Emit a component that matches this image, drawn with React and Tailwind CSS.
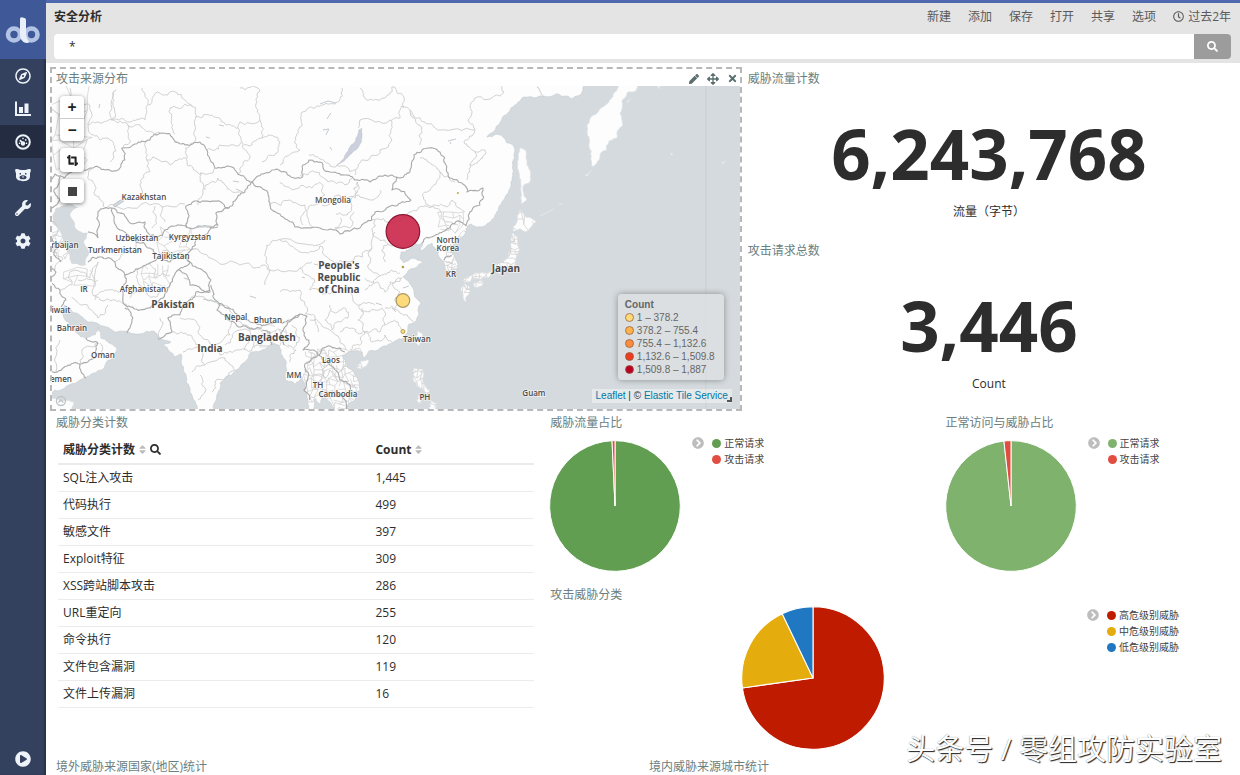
import React from "react";
import {
  FaArrowsAlt, FaChevronCircleRight, FaCog, FaCropAlt, FaPen, FaPlayCircle,
  FaRegClock, FaRegCompass, FaSearch, FaSort, FaTimes, FaWrench,
} from "react-icons/fa";

/* ---------- map geometry ---------- */

function makeRandom(seed) {
  let s = seed;
  return () => {
    s = (s * 16807) % 2147483647;
    return s / 2147483647 - 0.5;
  };
}

// Midpoint displacement turns a coarse outline into a natural-looking line.
function roughPath(text, seed, amount = 0.3, closed = false) {
  const random = makeRandom(seed * 7919 + 17);
  let pts = text.split(" ").map((p) => p.split(",").map(Number));
  if (closed) pts.push(pts[0]);
  for (let pass = 0; pass < 3; pass++) {
    const next = [pts[0]];
    for (let i = 1; i < pts.length; i++) {
      const [ax, ay] = pts[i - 1];
      const [bx, by] = pts[i];
      const d = Math.hypot(bx - ax, by - ay);
      if (d > 2.2 && d < 140) {
        const k = random() * amount * Math.min(d, 12);
        next.push([(ax + bx) / 2 - ((by - ay) / d) * k, (ay + by) / 2 + ((bx - ax) / d) * k]);
      }
      next.push(pts[i]);
    }
    pts = next;
  }
  return "M" + pts.map((p) => p[0].toFixed(1) + " " + p[1].toFixed(1)).join("L") + (closed ? "Z" : "");
}

// Jittered grid for areas that are split into many small provinces.
function meshPath(x, y, w, h, step, seed) {
  const random = makeRandom(seed * 7919 + 17);
  const cols = Math.round(w / step);
  const rows = Math.round(h / step);
  const pt = [];
  for (let r = 0; r <= rows; r++) {
    pt.push([]);
    for (let c = 0; c <= cols; c++) {
      pt[r].push((x + c * step + random() * step * 1.1).toFixed(1) + " " + (y + r * step + random() * step * 1.1).toFixed(1));
    }
  }
  let d = "";
  for (let r = 0; r <= rows; r++) {
    for (let c = 0; c <= cols; c++) {
      if (c < cols && random() > -0.25) d += `M${pt[r][c]}L${pt[r][c + 1]}`;
      if (r < rows && random() > -0.25) d += `M${pt[r][c]}L${pt[r + 1][c]}`;
    }
  }
  return d;
}

const MAINLAND =
  "45,80 583,80 583,88 580,95 571,99 566,96 558,94 548,97 543,96 539,88 537,87 543,96 532,97 522,98 515,105 510,111 500,123 487,137 497,134 504,138 507,143 513,145 515,150 513,165 511,182 505,198 496,214 485,226 476,227 471,224 466,229 462,238 454,244 450,249 454,255 458,264 457,273 451,277 446,276 445,267 443,261 440,258 438,250 432,243 427,246 421,251 423,243 416,244 408,250 401,252 400,258 404,263 412,258 423,262 417,267 408,271 403,277 409,282 414,290 417,299 421,303 418,310 419,315 415,322 409,324 408,332 402,339 392,343 380,348 369,351 364,358 362,352 352,351 343,355 347,366 356,376 360,390 354,401 345,409 338,411 330,402 322,397 320,404 314,399 313,411 308,411 306,393 302,376 295,384 286,381 287,370 283,357 276,344 270,345 262,350 250,353 245,362 232,375 220,383 217,395 214,411 198,411 190,392 184,372 181,354 175,357 163,345 171,342 160,338 152,331 130,333 115,332 103,326 88,322 76,313 65,305 60,310 68,322 77,333 86,338 95,335 98,327 101,338 108,342 117,348 113,357 105,366 95,373 80,380 65,388 45,393";

const ISLANDS = [
  "520,148 525,150 527,165 531,180 524,185 527,200 521,204 521,180 518,160",
  "520,210 526,217 536,222 530,228 524,232 519,229 513,231 517,222",
  "513,233 518,238 519,248 516,258 514,266 506,267 500,274 494,271 488,278 480,279 474,278 466,283 463,280 471,276 481,273 489,273 494,266 500,263 507,258 511,248 511,239",
  "464,284 469,286 470,292 466,302 463,298 461,290", "474,282 483,281 482,286 475,288",
  "619,80 618,88 611,99 600,109 590,119 587,132 589,146 592,167 600,158 602,152 607,150 609,141 617,138 618,130 623,125 620,113 622,101 628,92 636,91 643,80",
  "585,175 592,170 586,176", "418,331 422,333 419,346 415,342", "357,366 361,361 369,360 367,365 361,369 357,368",
  "414,368 423,369 423,382 430,391 427,394 417,387 413,379", "418,395 423,398 421,404 417,401", "431,400 437,403 436,410 429,408",
  "45,399 60,401 74,402 72,412 45,412", "627,102 631,99 628,103", "657,86 660,86 659,89", "671,153 673,155 671,155", "722,163 726,161 723,164",
];

const CASPIAN = "56,208 68,204 79,207 70,215 75,227 88,233 84,243 89,254 86,265 72,264 67,251 62,237 54,225 53,214";
const BAIKAL = "362,128 362,138 356,150 347,158 337,165 346,154 354,143 359,130";

const COUNTRY_BORDERS = [
  "50,182 55,174 64,178 72,172 84,170 92,168 105,170 120,168 125,160 122,148 135,144 150,140 160,133 170,134 175,142 185,145 200,142 207,150 215,168 228,166 240,175 252,182 258,176 272,170 290,176 303,176 303,165 309,160 320,162 330,172 345,175 355,180 370,182 385,175 400,178 410,172 414,155 428,148 440,152 446,165 450,178 462,183 467,192 483,188 480,205 470,212 466,226",
  "252,182 265,190 270,205 280,214 295,227 320,228 340,234 360,228 372,220 375,212 395,206 411,200 405,192 392,190 397,178",
  "252,182 245,192 238,196 229,208 216,213 218,225 208,233 196,238 191,250 186,256 190,262",
  "229,208 215,201 195,201 186,206 189,216 186,227 200,226 218,227",
  "98,238 98,212 112,208 124,214 130,223 145,222 149,234 157,238 165,230 175,226 187,227",
  "98,238 88,232", "112,208 120,230 135,240 150,248 160,256",
  "88,262 100,257 115,262 125,275 140,268 152,262 160,256 170,262 180,254 190,262",
  "125,275 123,290 125,305 135,309 150,308 163,298 170,285 178,270 190,262 205,272 211,280 210,292 200,288 190,285 187,275 178,270",
  "125,308 133,318 127,333", "210,290 196,292 190,300 180,315 168,318 172,332 158,339",
  "211,285 213,297 222,304 235,313 250,322 262,326 275,322 290,320 300,314",
  "220,303 217,310 230,321 245,326 262,328", "262,330 270,332 272,345", "300,314 288,322 281,335 284,345",
  "300,314 307,316 303,330 309,340 303,350 312,350 319,355 326,347 335,348 345,352",
  "318,355 305,364 309,375 304,390 310,400", "319,355 326,362 334,368 340,380 350,385 350,393 338,394 330,397",
  "50,236 57,245 54,252 61,262", "52,283 60,290 66,300 61,307", "50,262 56,272 50,280",
  "50,372 67,366 80,364 95,358 98,343 86,338", "80,364 86,378", "422,243 434,236 446,230 461,222 466,226", "444,260 452,256",
  "60,177 54,190 60,200 52,208", "338,394 345,400 347,409",
];

const REGION_BORDERS = [
  "70,88 76,102 90,106 88,124 97,122 112,120 113,104 116,90", "116,90 112,120 128,125 130,140 122,148",
  "88,124 95,136 108,138 115,146 110,162", "128,125 145,130 160,133", "112,120 130,122 145,120 148,105 142,88",
  "148,105 160,93 175,92 185,100 196,108 195,120 196,140", "175,134 172,120 170,108 185,104 192,106",
  "196,117 212,115 225,124 238,128 242,142 238,146 220,145 207,150", "238,128 240,122 260,120 262,138 252,145 244,145",
  "260,120 256,104 260,90 240,88", "262,138 272,135 280,143 275,155 262,162", "242,142 250,158 240,168 238,175",
  "196,140 186,148 188,166 205,174 215,168", "148,140 147,160 170,165 186,158", "147,160 150,172 140,185 150,198",
  "201,172 203,190 198,205", "92,168 90,180 95,195 105,208 115,206 120,200", "115,206 150,205 185,204", "162,206 165,222", "155,206 152,228",
  "240,192 225,185 218,178 205,190", "280,165 300,150 296,140 302,126 302,112 315,108 326,103 338,102 342,88",
  "309,155 325,162 337,165 350,172 355,170", "355,175 358,165 378,155 392,140 390,120 360,120 358,128", "390,120 400,118 402,106 410,110 414,118 425,122 440,130 475,130 468,120 475,98 500,96 502,86",
  "360,88 365,98 382,98 392,87 402,94 403,108", "475,130 464,142 475,152 470,172 467,180", "475,152 485,150 483,158 470,165", "410,110 422,128 420,145",
  "300,176 315,172 328,182 345,185 352,178", "280,182 290,188 312,188 322,184 325,195 312,205 308,218 312,228", "322,205 340,195 355,198 357,182", "336,214 350,212 354,196 372,200 380,190", "358,182 355,195", "270,205 290,200 305,205 303,225", "340,218 335,228 350,228 354,212",
  "375,220 372,230 385,240 395,245 403,249", "372,220 395,222 410,212 425,206 440,210 448,222 458,225", "420,158 432,165 440,172 434,185 425,192 428,205 445,206 452,200 465,212", "440,172 455,182",
  "191,250 215,260 240,265 262,265 270,270 300,268 312,262", "265,285 270,270 266,250 278,240 310,245 325,240", "280,240 300,252 320,246 330,260 350,262 372,248 375,232",
  "300,268 315,282 310,290 330,294 350,290 360,305 375,305", "280,292 300,290 305,314", "372,248 368,265 380,276 372,285 365,290", "380,276 392,270 400,273", "385,262 382,250 388,244", "365,278 378,282 385,292 390,282 402,278",
  "360,305 362,312 382,308 385,325 380,332 365,332 358,320 362,308", "330,310 345,308 348,318 332,330 325,320 330,305", "385,308 398,310 410,318 414,322", "395,310 400,292 392,285 402,278", "340,332 352,328 365,332 360,345 350,350", "385,325 398,322 405,332", "310,320 330,330 340,342 345,350", "365,332 372,342 385,335 392,342", "305,314 315,316 318,332",
  "60,290 72,285 70,272 90,278 98,262", "98,280 95,282 78,280", "98,262 92,292 100,300 115,300 128,308", "72,297 82,305 98,318 108,305", "120,292 105,290 95,300", "66,240 50,250", "115,262 122,254 130,252 138,240", "138,268 142,290 130,298", "142,290 158,296 165,285", "150,262 155,278 170,275", "160,256 168,250 175,255 185,250",
  "190,300 205,298 220,305 235,318 230,335 215,345 200,335 195,320 180,318", "160,318 158,338", "172,332 190,335 200,345 183,352", "215,345 220,355 240,350 262,345", "200,345 205,365 192,372", "205,365 225,358 235,370 215,382 212,392", "225,345 240,330 262,332", "235,318 250,330 255,348", "200,375 205,392 198,400", "245,350 250,335",
  "60,340 56,372", "80,364 82,350 98,343", "100,343 108,357", "55,250 63,258 55,270", "50,222 58,230 52,240",
  "308,352 316,358 325,350", "314,375 325,378 330,370 338,382", "313,388 325,390 330,397", "330,360 322,370 316,385", "345,365 338,372", "350,385 358,388", "288,345 296,350 290,362", "292,325 300,338 294,348",
  "446,262 456,264", "448,270 458,269",
];

// [x, y, width, height, cell]
const MESHES = [
  [306, 350, 54, 60, 5], [144, 266, 26, 24, 6], [160, 230, 32, 24, 7], [54, 88, 34, 80, 11],
  [50, 225, 16, 36, 6], [444, 246, 16, 30, 5], [460, 232, 62, 56, 4], [462, 286, 10, 16, 4],
  [414, 368, 24, 40, 4], [262, 325, 24, 22, 6], [513, 208, 24, 24, 7], [68, 268, 24, 20, 9], [440, 212, 24, 16, 6],
];

const MAP_LABELS = [
  ["Kazakhstan", 144, 200], ["Uzbekistan", 137, 241], ["Kyrgyzstan", 190, 240], ["Turkmenistan", 115, 253],
  ["Tajikistan", 171, 259], ["rbaijan", 65, 248], ["IR", 84, 292], ["Afghanistan", 143, 292], ["iwait", 61, 313],
  ["Bahrain", 72, 331], ["Oman", 103, 358], ["emen", 61, 382], ["Nepal", 236, 320], ["Bhutan", 268, 323],
  ["Mongolia", 333, 203], ["North", 448, 243], ["Korea", 448, 251], ["KR", 451, 277], ["Taiwan", 417, 342],
  ["Laos", 331, 363], ["MM", 294, 378], ["TH", 318, 388], ["Cambodia", 338, 397], ["PH", 425, 400], ["Guam", 534, 396],
];
const BIG_MAP_LABELS = [
  ["Pakistan", 173, 308], ["India", 210, 352], ["Bangladesh", 267, 341], ["Japan", 506, 272],
  ["People's", 339, 269], ["Republic", 339, 281], ["of China", 339, 293],
];

function AsiaMap() {
  const mainland = roughPath(MAINLAND, 3, 0.3, true);
  const islands = ISLANDS.map((p, i) => roughPath(p, i + 5, 0.3, true));
  return (
    <svg className="block h-full w-full" viewBox="52 86 688 323" preserveAspectRatio="xMidYMid slice" role="img" aria-label="攻击来源分布">
      <clipPath id="land"><path d={mainland + islands.join("")} /></clipPath>
      <rect x="-400" y="-200" width="1600" height="900" fill="#d4dadd" />
      <path d={mainland} fill="#fdfdfd" stroke="#c4cbd0" strokeWidth="0.6" />
      {islands.map((d, i) => <path key={i} d={d} fill="#fdfdfd" stroke="#dfe3e6" strokeWidth="0.8" />)}
      <g fill="none" stroke="#cdcdcd" strokeWidth="0.7" clipPath="url(#land)">
        {MESHES.map(([x, y, w, h, cell], i) => <path key={i} d={meshPath(x, y, w, h, cell, i + 200)} />)}
      </g>
      <path d={roughPath(CASPIAN, 8, 0.3, true)} fill="#d4dadd" />
      <path d={roughPath(BAIKAL, 9, 0.2, true)} fill="#ccd0dc" stroke="#bfc2cf" strokeWidth="0.6" />
      <g fill="none" stroke="#cccccc" strokeWidth="0.9">
        {REGION_BORDERS.map((p, i) => <path key={i} d={roughPath(p, i + 30, 0.55)} />)}
      </g>
      <g fill="none" stroke="#a9a9a9" strokeWidth="1.1" strokeLinejoin="round">
        {COUNTRY_BORDERS.map((p, i) => <path key={i} d={roughPath(p, i + 90, 0.4)} />)}
      </g>
      <g fill="none" stroke="#bcc4ca" strokeWidth="0.9">
        <path d="M706 60V440" stroke="#c6ccd0" />
        <path d="M540 216l14-7M559 205l4-2" stroke="#e6eaec" />
        <path d="M320 104l8-3 8 2M323 130l6-1-3 6M330 147l2 3M331 113l-4 6M100 104l-1 4M206 137l4 1M219 125l5 1M448 141l8-2M450 142l1 2M233 181l6 1M236 189l7 3M184 278l6 2M203 299l14 3M250 296l6 2M302 277l3 1M314 264l4 1M376 303l6 2M403 288l6-2M392 308l4 4" />
        <path d="M196 228q8-4 18-1M113 205l8-5 3 1-9 6z" fill="#d4dadd" />
      </g>
      <g className="font-['Open_Sans',sans-serif] font-semibold" textAnchor="middle" fill="#4b4b4b" stroke="#ffffff" strokeOpacity="0.6" strokeWidth="1.6" paintOrder="stroke">
        <g fontSize="8">{MAP_LABELS.map(([t, x, y]) => <text key={t} x={x} y={y}>{t}</text>)}</g>
        <g fontSize="10" className="font-bold">{BIG_MAP_LABELS.map(([t, x, y]) => <text key={t} x={x} y={y}>{t}</text>)}</g>
      </g>
      <circle cx="403" cy="231.5" r="16.8" fill="#c91f44" fillOpacity="0.88" stroke="#8d1733" strokeWidth="1.2" />
      <circle cx="403" cy="300.5" r="6.8" fill="#fdda7c" stroke="#ab9860" strokeWidth="1.2" />
      <circle cx="403" cy="331.5" r="2" fill="#f7dc8c" stroke="#b9a14c" />
      <circle cx="403" cy="267" r="1.3" fill="#b79a3c" />
      <circle cx="458" cy="193" r="0.9" fill="#b79a3c" />
      <g fill="none" stroke="#bfc3c6" strokeWidth="1.3">
        <circle cx="61" cy="401" r="4.5" />
        <path d="M58.500 402.500l2.500-2.500 2.500 2.500" />
      </g>
    </svg>
  );
}

/* ---------- icons ---------- */

function Logo() {
  return (
    <svg className="h-[30px] w-[38px]" viewBox="4 15 38 30" fill="none" aria-hidden="true">
      <circle cx="14" cy="34.500" r="6" stroke="#b3c3e6" strokeWidth="4.600" />
      <circle cx="31.500" cy="34.500" r="6" stroke="#b3c3e6" strokeWidth="4.600" />
      <path d="M20 19Q20 17.200 21.600 17.300L24.600 17.900Q26 18.300 26 20V33.500Q26 38.500 29.500 42.300Q26.500 43.600 23.500 42Q20 39.500 20 34Z" fill="#e9effa" />
    </svg>
  );
}

function BarChartIcon() {
  return (
    <svg className="h-4 w-4" viewBox="0 0 16 16" fill="currentColor" aria-hidden="true">
      <path d="M0 .500h2v12.500h14V15H0zM4 6h4v6H4zM9.500 2.500h4V12h-4z" />
    </svg>
  );
}

function GaugeIcon() {
  return (
    <svg className="h-4 w-4" viewBox="0 0 16 16" fill="none" stroke="currentColor" aria-hidden="true">
      <circle cx="8" cy="8" r="6.800" strokeWidth="2" />
      <circle cx="8" cy="9.500" r="2.200" fill="currentColor" stroke="none" />
      <path d="M8 9.300L4.900 6.100" strokeWidth="1.700" />
      <path d="M3.900 9.300h1.200M10.900 9.300h1.200M7.300 4.500h1.400M10.200 6.500l1.100-1.100" strokeWidth="1.600" />
    </svg>
  );
}

function BearIcon() {
  return (
    <svg className="h-4 w-4" viewBox="0 0 16 16" fill="currentColor" fillRule="evenodd" aria-hidden="true">
      <path d="M.300 2.300C2 1.700 3.500 2 4.500 2.700c2 .5 5 .5 7 0 1-.7 2.500-1 4.200-.4.200 1.700 0 2.800-.7 3.700v3.500c0 3-3 4.700-7 4.700s-7-1.700-7-4.700V6C.300 5.100.100 4 .300 2.300zM4.600 6v1.400h1.400V6zm5.400 0v1.400h1.400V6zM8 8.200c-2.300 0-3.500 1-3.500 2.200s1.500 1.900 3.500 1.900 3.500-.7 3.500-1.900S10.300 8.200 8 8.200zm-1.300 1.200h2.600L8 11z" />
    </svg>
  );
}

/* ---------- shared pieces ---------- */

function Panel({ title, className = "", actions, children }) {
  return (
    <section className={"flex min-w-0 flex-col border-2 " + className}>
      <header className="flex h-[17px] flex-none items-center justify-between pl-1 pt-0.5">
        <h2 className="text-xs leading-[17px] text-[#6b8080]">{title}</h2>
        {actions}
      </header>
      {children}
    </section>
  );
}

function Pie({ slices, className }) {
  let angle = 0;
  const point = (a) => {
    const r = (a * Math.PI) / 180;
    return (100 + 99 * Math.sin(r)).toFixed(2) + " " + (100 - 99 * Math.cos(r)).toFixed(2);
  };
  return (
    <svg className={className} viewBox="0 0 200 200" aria-hidden="true">
      {slices.map(([label, color, degrees]) => {
        const start = angle;
        angle += degrees;
        return (
          <path
            key={label}
            d={`M100 100L${point(start)}A99 99 0 ${degrees > 180 ? 1 : 0} 1 ${point(angle)}Z`}
            fill={color}
            stroke="#fff"
            strokeWidth="1.5"
          />
        );
      })}
    </svg>
  );
}

function Legend({ slices, className = "" }) {
  return (
    <div className={"flex flex-none items-start gap-2 pt-[5px] " + className}>
      <button type="button" aria-label="切换图例" className="mt-0.5 text-[#bdbdbd]">
        <FaChevronCircleRight className="h-3 w-3" />
      </button>
      <ul className="text-[10px] leading-4 text-[#444]">
        {slices.map(([label, color]) => (
          <li key={label} className="flex items-center gap-[3px] whitespace-nowrap">
            <svg className="h-[9px] w-[9px]" viewBox="0 0 9 9" aria-hidden="true"><circle cx="4.500" cy="4.500" r="4.500" fill={color} /></svg>
            {label}
          </li>
        ))}
      </ul>
    </div>
  );
}

function Metric({ value, label }) {
  return (
    <div className="flex flex-1 flex-col items-center pt-5">
      <p className="text-[69px] font-bold leading-[94px] text-[#2d2d2d]">{value}</p>
      <p className="pt-0.5 text-xs leading-5 text-[#2d2d2d]">{label}</p>
    </div>
  );
}

/* ---------- data ---------- */

const NAV = [
  ["发现", <FaRegCompass className="h-4 w-4" />],
  ["可视化", <BarChartIcon />],
  ["仪表板", <GaugeIcon />],
  ["时间序列", <BearIcon />],
  ["开发工具", <FaWrench className="h-4 w-4" />],
  ["管理", <FaCog className="h-4 w-4" />],
];

const ROWS = [
  ["SQL注入攻击", "1,445"], ["代码执行", "499"], ["敏感文件", "397"], ["Exploit特征", "309"], ["XSS跨站脚本攻击", "286"],
  ["URL重定向", "255"], ["命令执行", "120"], ["文件包含漏洞", "119"], ["文件上传漏洞", "16"],
];

const RANGES = [
  ["1 – 378.2", "#fed976"], ["378.2 – 755.4", "#feb24c"], ["755.4 – 1,132.6", "#fd8d3c"],
  ["1,132.6 – 1,509.8", "#f03b20"], ["1,509.8 – 1,887", "#bd0026"],
];

const TRAFFIC = [["正常请求", "#629e51", 357.4], ["攻击请求", "#e24d42", 2.6]];
const VISITS = [["正常请求", "#7eb26d", 353.8], ["攻击请求", "#e24d42", 6.2]];
const LEVELS = [["高危级别威胁", "#bf1b00", 262], ["中危级别威胁", "#e5ac0e", 72.4], ["低危级别威胁", "#1f78c1", 25.6]];

/* ---------- page ---------- */

function Sidebar() {
  return (
    <nav className="flex w-[46px] flex-none flex-col bg-[#34415e] text-[#eef3fa] shadow-[inset_-2px_0_2px_#28324c]">
      <a href="#home" aria-label="首页" className="flex h-[59px] items-center justify-center bg-[#3f5898]"><Logo /></a>
      {NAV.map(([label, icon], i) => (
        <a key={label} href={"#nav-" + i} aria-label={label} className={"flex h-[33px] items-center justify-center " + (i === 2 ? "bg-[#232c40]" : "")}>
          {icon}
        </a>
      ))}
      <button type="button" aria-label="展开菜单" className="mt-auto flex h-[33px] items-center justify-center">
        <FaPlayCircle className="h-4 w-4" />
      </button>
    </nav>
  );
}

function TopBar() {
  return (
    <header className="flex-none border-t-[3px] border-[#5068b0] bg-[#e4e4e4] pb-1 pl-2 pr-[9px]">
      <div className="flex h-[31px] items-center justify-between pb-1 text-xs">
        <h1 className="font-semibold text-[#2d2d2d]">安全分析</h1>
        <div className="flex gap-[17px] text-[#5a5a5a]">
          {["新建", "添加", "保存", "打开", "共享", "选项"].map((t) => <button key={t} type="button">{t}</button>)}
          <button type="button" className="flex items-center gap-1"><FaRegClock className="h-[11px] w-[11px]" />过去2年</button>
        </div>
      </div>
      <form className="flex h-[25px]" onSubmit={(e) => e.preventDefault()}>
        <input aria-label="搜索" defaultValue="*" className="min-w-0 flex-1 rounded-l bg-white px-[15px] text-xs text-[#2d2d2d] outline-none" />
        <button type="submit" aria-label="提交搜索" className="flex w-[37px] items-center justify-center rounded-r bg-[#9c9c9c] text-white">
          <FaSearch className="h-[11px] w-[11px]" />
        </button>
      </form>
    </header>
  );
}

function MapPanel() {
  const box = "flex h-6 w-6 items-center justify-center rounded bg-white text-[#222] shadow-[0_1px_4px_rgba(0,0,0,0.5)]";
  return (
    <Panel
      title="攻击来源分布"
      className="col-span-7 row-span-2 border-dashed border-[#b8b8b8]"
      actions={
        <div className="flex gap-2 pr-0.5 text-[#5a6e6e]">
          <button type="button" aria-label="编辑"><FaPen className="h-[10px] w-[10px]" /></button>
          <button type="button" aria-label="移动"><FaArrowsAlt className="h-3 w-3" /></button>
          <button type="button" aria-label="移除"><FaTimes className="h-[11px] w-[11px]" /></button>
        </div>
      }
    >
      <div className="relative min-h-0 flex-1 overflow-hidden">
        <AsiaMap />
        <div className="absolute left-2 top-2.5 flex flex-col gap-[7px]">
          <div className="flex h-[45px] w-6 flex-col rounded bg-white text-base font-bold leading-none text-[#222] shadow-[0_1px_4px_rgba(0,0,0,0.5)]">
            <button type="button" aria-label="放大" className="flex-1 border-b border-[#ccc]">+</button>
            <button type="button" aria-label="缩小" className="flex-1">−</button>
          </div>
          <button type="button" aria-label="裁剪" className={box}><FaCropAlt className="h-[11px] w-[11px]" /></button>
          <button type="button" aria-label="框选" className={box}><span className="h-[9px] w-[9px] bg-[#444]" /></button>
        </div>
        <div className="absolute bottom-[29px] right-4 w-[106px] rounded bg-[#dce0e3]/80 px-[7px] py-1 font-['Liberation_Sans',sans-serif] text-[10px] leading-[13px] text-[#666] shadow-[0_0_6px_rgba(0,0,0,0.35)]">
          <p className="font-bold">Count</p>
          <ul>
            {RANGES.map(([label, color]) => (
              <li key={label} className="flex items-center gap-[3px] whitespace-nowrap">
                <svg className="h-[9px] w-[9px]" viewBox="0 0 9 9" aria-hidden="true"><circle cx="4.500" cy="4.500" r="4" fill={color} stroke="#8a5a3a" strokeOpacity="0.7" /></svg>
                {label}
              </li>
            ))}
          </ul>
        </div>
        <p className="absolute bottom-1.5 right-2 bg-white/40 px-1 font-['Liberation_Sans',sans-serif] text-[10px] leading-[14px] text-[#333]">
          <a href="#leaflet" className="text-[#0078a8]">Leaflet</a> | © <a href="#tiles" className="text-[#0078a8]">Elastic Tile Service</a>
        </p>
        <span className="absolute bottom-[7px] right-2 h-[5px] w-[5px] border-b-2 border-r-2 border-[#555]" />
      </div>
    </Panel>
  );
}

export default function App() {
  const plain = "border-transparent ";
  return (
    <div className="relative flex h-screen overflow-hidden bg-white font-['Open_Sans','Noto_Sans_CJK_SC',sans-serif] text-[#2d2d2d]">
      <Sidebar />
      <div className="flex min-w-0 flex-1 flex-col">
        <TopBar />
        <main className="grid min-h-0 flex-1 auto-rows-[172px] grid-cols-12 overflow-hidden px-1 pt-1">
          <MapPanel />
          <Panel title="威胁流量计数" className={plain + "col-span-5"}><Metric value="6,243,768" label="流量（字节）" /></Panel>
          <Panel title="攻击请求总数" className={plain + "col-span-5"}><Metric value="3,446" label="Count" /></Panel>

          <Panel title="威胁分类计数" className={plain + "col-span-5 row-span-2"}>
            <div className="pl-1.5 pr-2 pt-1.5">
              <table className="w-full table-fixed text-left text-xs">
                <thead>
                  <tr className="h-7 border-b-2 border-[#ebebeb]">
                    <th className="w-2/3 pl-[5px] font-bold">
                      <span className="flex items-center">威胁分类计数<FaSort className="ml-0.5 h-[11px] w-[11px] text-[#bbb]" /><FaSearch className="ml-0.5 h-[11px] w-[11px]" /></span>
                    </th>
                    <th className="font-bold"><span className="flex items-center">Count<FaSort className="ml-0.5 h-[11px] w-[11px] text-[#bbb]" /></span></th>
                  </tr>
                </thead>
                <tbody>
                  {ROWS.map(([name, count]) => (
                    <tr key={name} className="h-[27px] border-b border-[#ececec]">
                      <td className="pl-[5px]">{name}</td>
                      <td>{count}</td>
                    </tr>
                  ))}
                </tbody>
              </table>
            </div>
          </Panel>
          <Panel title="威胁流量占比" className={plain + "col-span-4"}>
            <div className="flex gap-[11px] pl-[3px]"><Pie slices={TRAFFIC} className="mt-2.5 h-[132px] w-[132px] flex-none" /><Legend slices={TRAFFIC} /></div>
          </Panel>
          <Panel title="正常访问与威胁占比" className={plain + "col-span-3"}>
            <div className="flex gap-[11px] pl-[3px]"><Pie slices={VISITS} className="mt-2.5 h-[132px] w-[132px] flex-none" /><Legend slices={VISITS} /></div>
          </Panel>
          <Panel title="攻击威胁分类" className={plain + "col-span-7"}>
            <div className="flex pl-[3px]">
              <div className="flex min-w-0 flex-1 justify-center pt-1"><Pie slices={LEVELS} className="h-[144px] w-[144px]" /></div>
              <Legend slices={LEVELS} className="w-[158px] pl-[11px]" />
            </div>
          </Panel>

          <Panel title="境外威胁来源国家(地区)统计" className={plain + "col-span-6"} />
          <Panel title="境内威胁来源城市统计" className={plain + "col-span-6"} />
        </main>
      </div>
      <p className="pointer-events-none absolute bottom-2 right-[18px] text-[29px] leading-9 text-white [text-shadow:1px_1px_1px_#222,0_0_1px_#777]">头条号 / 零组攻防实验室</p>
    </div>
  );
}
